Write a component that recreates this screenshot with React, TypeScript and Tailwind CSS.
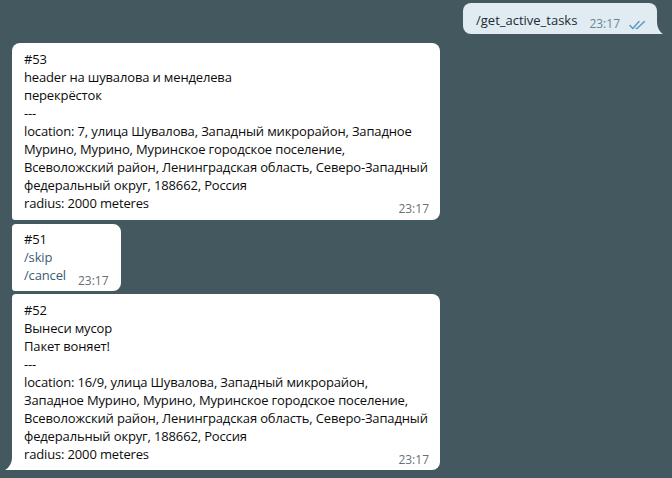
import React from 'react'

const font = { fontFamily: '"Open Sans", "Noto Sans", sans-serif' }

const DoubleCheck = () => (
    <svg width="17" height="10" viewBox="0 0 17 10" fill="none" stroke="#5b9cc0" strokeWidth="1.5" strokeLinecap="round" strokeLinejoin="round">
        <path d="M1 5.5 L3.8 8.5 L10 1.5" />
        <path d="M7.2 8.5 L8 8.5 L15.5 1.5" />
    </svg>
)

const TailLeft = ({ color }: { color: string }) => (
    <svg className="absolute bottom-0 -left-[7px]" width="7" height="13" viewBox="0 0 7 13">
        <path d="M7 0 C7 6 4.5 10.5 0 13 H7 Z" fill={color} />
    </svg>
)

const TailRight = ({ color }: { color: string }) => (
    <svg className="absolute bottom-0 -right-[6px]" width="6" height="13" viewBox="0 0 6 13">
        <path d="M0 0 C0 6 2 10.5 6 13 H0 Z" fill={color} />
    </svg>
)

const Time = ({ className = '' }: { className?: string }) => (
    <span className={`text-[12px] leading-[14px] tracking-normal text-[#6a6f73] self-end -mb-[4px] ${className}`}>23:17</span>
)

function Lines({ lines, last }: { lines: string[]; last: string }) {
    return (
        <>
            {lines.map((l, i) => (
                <div key={i} className="whitespace-nowrap">{l}</div>
            ))}
            <div className="flex items-end justify-between">
                <span className="whitespace-nowrap">{last}</span>
                <Time />
            </div>
        </>
    )
}

export default function App() {
    return (
        <div style={font} className="w-[672px] h-[478px] bg-[#44585f] overflow-hidden flex flex-col text-[13px] leading-[18px] tracking-[-0.15px] text-[#0c0c0c]">

            {/* outgoing */}
            <div className="flex justify-end pt-[3px] pr-[15px]">
                <div className="relative bg-[#e0ecf2] rounded-[8px] rounded-br-none pl-[13px] pr-[11px] pt-[8px] pb-[5px] flex items-end">
                    <span className="text-[#1c2a33] tracking-normal">/get_active_tasks</span>
                    <span className="ml-[12px] text-[12px] leading-[14px] tracking-normal text-[#6a8596] -mb-[2px]">23:17</span>
                    <span className="ml-[9px] -mb-[1px]"><DoubleCheck /></span>
                    <TailRight color="#e0ecf2" />
                </div>
            </div>

            {/* incoming */}
            <div className="flex flex-col items-start pl-[12px] mt-[9px]">
                <div className="w-[428px] bg-white rounded-[8px] rounded-bl-[3px] pl-[12px] pr-[11px] pt-[7px] pb-[8px]">
                    <Lines
                        lines={[
                            '#53',
                            'header на шувалова и менделева',
                            'перекрёсток',
                            '---',
                            'location: 7, улица Шувалова, Западный микрорайон, Западное',
                            'Мурино, Мурино, Муринское городское поселение,',
                            'Всеволожский район, Ленинградская область, Северо-Западный',
                            'федеральный округ, 188662, Россия',
                        ]}
                        last="radius: 2000 meteres"
                    />
                </div>

                <div className="mt-[4px] bg-white rounded-[8px] rounded-tl-[4px] rounded-bl-[3px] pl-[12px] pr-[12px] pt-[6px] pb-[7px]">
                    <div>#51</div>
                    <div className="text-[#3c5b74]">/skip</div>
                    <div className="flex items-end">
                        <span className="text-[#3c5b74]">/cancel</span>
                        <Time className="ml-[12px]" />
                    </div>
                </div>

                <div className="relative mt-[3px] w-[428px] bg-white rounded-[8px] rounded-tl-[4px] rounded-bl-none pl-[12px] pr-[11px] pt-[7px] pb-[7px]">
                    <Lines
                        lines={[
                            '#52',
                            'Вынеси мусор',
                            'Пакет воняет!',
                            '---',
                            'location: 16/9, улица Шувалова, Западный микрорайон,',
                            'Западное Мурино, Мурино, Муринское городское поселение,',
                            'Всеволожский район, Ленинградская область, Северо-Западный',
                            'федеральный округ, 188662, Россия',
                        ]}
                        last="radius: 2000 meteres"
                    />
                    <TailLeft color="#ffffff" />
                </div>
            </div>
        </div>
    )
}
